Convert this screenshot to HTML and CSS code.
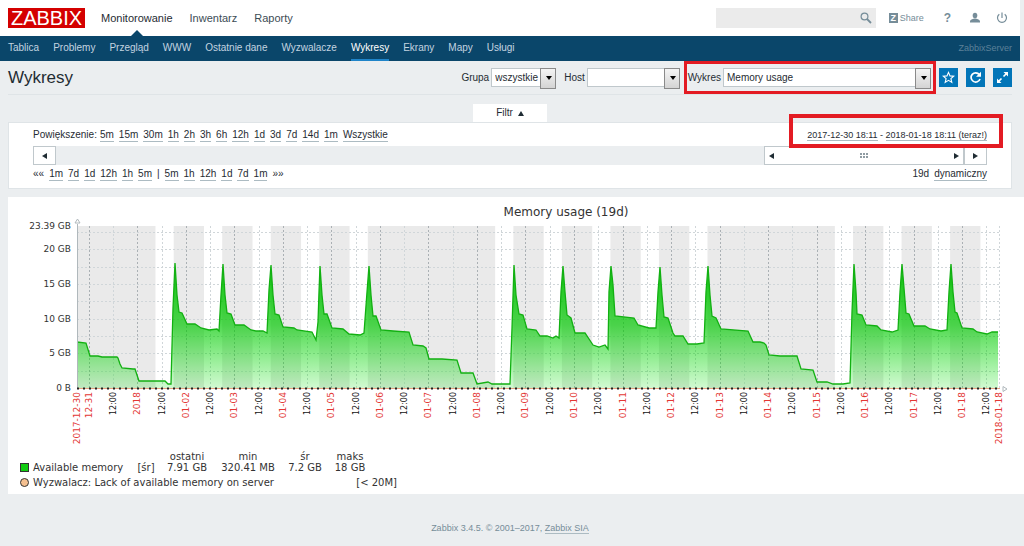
FILE: index.html
```html
<!DOCTYPE html>
<html lang="pl">

<head>
    <meta charset="UTF-8">
    <meta name="viewport" content="width=device-width, initial-scale=1.0">
    <title>Wykresy</title>
    <link rel="stylesheet" href="styles.css">
</head>

<body>
    <header class="header">
        <a href="#" class="logo">ZABBIX</a>
        <nav class="top-nav">
            <a href="#" class="selected">Monitorowanie</a>
            <a href="#">Inwentarz</a>
            <a href="#">Raporty</a>
        </nav>
        <form class="search">
            <input type="text" aria-label="Szukaj">
            <button type="button" aria-label="Szukaj">
                <svg width="12" height="12" viewBox="0 0 12 12"><circle cx="4.5" cy="4.5" r="3.4" fill="none" stroke="#768d99" stroke-width="1.2"/><path d="M7 7l4 4" stroke="#768d99" stroke-width="1.8"/></svg>
            </button>
        </form>
        <a href="#" class="share"><b>Z</b>Share</a>
        <a href="#" class="help">?</a>
        <a href="#" class="user" aria-label="Profil">
            <svg width="12" height="12" viewBox="0 0 12 12" fill="#768d99"><ellipse cx="6" cy="3.6" rx="2.3" ry="2.8"/><path d="M1 10.5V9.4C1 8 2.6 7.6 4.4 6.8h3.2C9.4 7.6 11 8 11 9.4v1.100z"/></svg>
        </a>
        <a href="#" class="signout" aria-label="Wyloguj">
            <svg width="12" height="12" viewBox="0 0 12 12" fill="none" stroke="#768d99" stroke-width="1.2"><path d="M3.3 2.2a4.500 4.500 0 1 0 5.400 0M6 0.500V6"/></svg>
        </a>
    </header>

    <nav class="sub-nav">
        <a href="#">Tablica</a>
        <a href="#">Problemy</a>
        <a href="#">Przegląd</a>
        <a href="#">WWW</a>
        <a href="#">Ostatnie dane</a>
        <a href="#">Wyzwalacze</a>
        <a href="#" class="selected">Wykresy</a>
        <a href="#">Ekrany</a>
        <a href="#">Mapy</a>
        <a href="#">Usługi</a>
        <span class="server-name">ZabbixServer</span>
    </nav>

    <div class="title-bar">
        <h1>Wykresy</h1>
        <div class="field">
            <label for="group">Grupa</label>
            <span class="select group"><select id="group"><option>wszystkie</option></select></span>
        </div>
        <div class="field">
            <label for="host">Host</label>
            <span class="select host"><select id="host"><option></option></select></span>
        </div>
        <div class="field marked">
            <label for="graph">Wykres</label>
            <span class="select graph"><select id="graph"><option>Memory usage</option></select></span>
        </div>
        <div class="buttons">
            <button type="button" aria-label="Dodaj do ulubionych">
                <svg width="13" height="13" viewBox="0 0 13 13" fill="none" stroke="#fff" stroke-width="1.1"><path d="M6.5 1.4l1.500 3.500 3.700.300-2.800 2.500.900 3.700-3.300-2-3.300 2 .9-3.700L1.3 5.2 5 4.9z"/></svg>
            </button>
            <button type="button" aria-label="Odśwież">
                <svg width="13" height="13" viewBox="0 0 13 13" fill="none"><path d="M10.3 3.6A4.6 4.6 0 1 0 11 8" stroke="#fff" stroke-width="1.7"/><path d="M12 .8v5H7z" fill="#fff"/></svg>
            </button>
            <button type="button" aria-label="Pełny ekran">
                <svg width="13" height="13" viewBox="0 0 13 13"><path d="M7.5 1H12v4.500zM1 7.500V12h4.500z" fill="#fff"/><path d="M10.5 2.500L7.5 5.500M2.500 10.500l3-3" stroke="#fff" stroke-width="1.6"/></svg>
            </button>
        </div>
    </div>

    <div class="filter-tab"><button type="button">Filtr <i class="arrow-up"></i></button></div>

    <section class="filter">
        <div class="filter-row">
            <div class="links zoom">
                <span>Powiększenie:</span>
                <a href="#">5m</a> <a href="#">15m</a> <a href="#">30m</a> <a href="#">1h</a> <a href="#">2h</a>
                <a href="#">3h</a> <a href="#">6h</a> <a href="#">12h</a> <a href="#">1d</a> <a href="#">3d</a>
                <a href="#">7d</a> <a href="#">14d</a> <a href="#">1m</a> <a href="#">Wszystkie</a>
            </div>
            <div class="period"><a href="#">2017-12-30 18:11</a> - <a href="#">2018-01-18 18:11 (teraz!)</a></div>
        </div>
        <div class="scrollbar">
            <button type="button" class="scroll-btn" aria-label="Wstecz"><i class="arrow-left"></i></button>
            <div class="track">
                <div class="thumb"><i class="arrow-left"></i><i class="grip"></i><i class="arrow-right"></i></div>
            </div>
            <button type="button" class="scroll-btn" aria-label="Dalej"><i class="arrow-right"></i></button>
        </div>
        <div class="filter-row">
            <div class="links">
                <span>««</span>
                <a href="#">1m</a> <a href="#">7d</a> <a href="#">1d</a> <a href="#">12h</a> <a href="#">1h</a> <a href="#">5m</a>
                <span>|</span>
                <a href="#">5m</a> <a href="#">1h</a> <a href="#">12h</a> <a href="#">1d</a> <a href="#">7d</a> <a href="#">1m</a>
                <span>»»</span>
            </div>
            <div class="links"><span>19d</span> <a href="#">dynamiczny</a></div>
        </div>
    </section>

    <section class="chart">
        <svg id="chart" viewBox="0 0 1016 252">
            <defs>
                <linearGradient id="fill" gradientUnits="userSpaceOnUse" x1="0" y1="66" x2="0" y2="191">
                    <stop offset="0" stop-color="#00c000" stop-opacity="0.95"/>
                    <stop offset="0.5" stop-color="#00c800" stop-opacity="0.68"/>
                    <stop offset="1" stop-color="#00e000" stop-opacity="0.18"/>
                </linearGradient>
            </defs>
            <text class="chart-title" x="558" y="19">Memory usage (19d)</text>
            <g id="bands"></g>
            <g id="grid"></g>
            <g id="series"></g>
            <path class="axis" d="M69.5 191V27M67 26l2.500-4 2.500 4zM995 189.500l4 2.500-4 2.500z"/>
            <path class="trigger" d="M69 191.500H992"/>
            <path class="trigger-dash" d="M69 191.500H992"/>
            <g id="labels"></g>
        </svg>

        <table class="legend">
            <tr>
                <td class="name"></td>
                <td class="func"></td>
                <th class="last">ostatni</th>
                <th class="min">min</th>
                <th class="avg">śr</th>
                <th class="max">maks</th>
            </tr>
            <tr>
                <td class="name"><i class="square"></i>Available memory</td>
                <td class="func">[śr]</td>
                <td>7.91 GB</td>
                <td>320.41 MB</td>
                <td>7.2 GB</td>
                <td>18 GB</td>
            </tr>
        </table>
        <div class="legend-trigger">
            <span><i class="circle"></i>Wyzwalacz: Lack of available memory on server</span>
            <span>[&lt; 20M]</span>
        </div>
    </section>

    <footer>Zabbix 3.4.5. © 2001–2017, <a href="#">Zabbix SIA</a></footer>

    <script>
        const NS = 'http://www.w3.org/2000/svg';
        const left = 69, right = 991, top_ = 29, bottom = 191;
        const day = (right - left) / 19;
        const gb = (bottom - top_) / 23.39;
        // pierwsza północ: 2017-12-31
        const midnight = left + day * 349 / 1440;

        // x, y kolejnych próbek
        const points = [
            69,145, 78,146, 82,159, 90,159, 94,160, 109,160, 110,161, 112,167, 114,171, 125,172, 127,172, 131,184,
            157,184, 160,187, 163,187, 165,111, 167,66, 169,98, 171,115, 174,116, 179,127, 187,127, 193,131, 201,133,
            209,132, 211,134, 213,98, 215,67, 217,98, 219,116, 223,117, 227,128, 236,128, 243,133, 248,134, 255,134,
            259,136, 261,93, 263,68, 265,98, 267,117, 271,118, 275,130, 286,131, 289,133, 304,135, 308,143, 310,125,
            311,95, 312,69, 314,98, 316,117, 319,117, 324,131, 335,132, 341,137, 352,138, 356,136, 359,95, 361,69,
            363,98, 365,119, 368,119, 373,133, 385,134, 401,135, 405,148, 415,149, 418,151, 421,162, 434,162, 449,163,
            453,176, 465,176, 469,187, 480,185, 484,187, 497,187, 502,187, 504,131, 506,68, 508,98, 511,117, 515,118,
            519,132, 528,133, 532,139, 539,139, 545,141, 548,139, 551,141, 553,95, 555,69, 557,95, 559,118, 563,121,
            567,136, 577,136, 585,148, 591,150, 597,148, 600,152, 601,95, 603,69, 605,88, 607,119, 626,121, 630,128,
            641,131, 648,131, 650,95, 652,70, 654,98, 656,120, 660,121, 665,136, 667,139, 675,139, 680,147, 689,147,
            696,146, 698,95, 700,69, 702,98, 704,119, 708,121, 713,132, 740,134, 745,145, 752,145, 756,146, 758,148,
            761,158, 772,159, 789,159, 793,172, 805,173, 809,185, 819,185, 825,187, 835,187, 842,186, 844,115, 846,67,
            848,95, 849,117, 854,118, 858,128, 869,129, 873,133, 884,135, 890,133, 892,95, 894,67, 896,91, 898,116,
            901,117, 906,129, 917,129, 922,132, 933,134, 939,133, 941,95, 943,67, 945,95, 947,115, 949,116, 954,131,
            965,132, 969,135, 979,137, 984,135, 990,135
        ];

        function add(group, tag, attrs, text) {
            const el = document.createElementNS(NS, tag);
            for (const key in attrs) {
                el.setAttribute(key, attrs[key]);
            }
            if (text) {
                el.textContent = text;
            }
            document.getElementById(group).appendChild(el);
        }

        function xLabel(x, text, cls) {
            add('labels', 'text', { class: cls, transform: `translate(${x} 195) rotate(-90)` }, text);
        }

        // tło: cały wykres szary, godziny pracy 9-18 białe (oprócz weekendów)
        add('bands', 'rect', { class: 'off-hours', x: left, y: top_, width: right - left, height: bottom - top_ });
        for (let i = 1; i < 18; i++) {
            const weekday = i % 7;
            if (weekday !== 0 && weekday !== 6) {
                add('bands', 'rect', { class: 'work-hours', x: midnight + day * (i + 0.375), y: top_, width: day * 0.375, height: bottom - top_ });
            }
        }
        add('bands', 'rect', { class: 'work-hours', x: midnight + day * 18.375, y: top_, width: right - midnight - day * 18.375, height: bottom - top_ });

        // siatka i opisy osi Y
        for (let v = 2.5; v < 23; v += 2.5) {
            const y = Math.round(bottom - v * gb) + 0.5;
            add('grid', 'path', { class: 'minor', d: `M${left} ${y}H${right}` });
        }
        [[0, '0 B'], [5, '5 GB'], [10, '10 GB'], [15, '15 GB'], [20, '20 GB'], [23.39, '23.39 GB']].forEach(([v, text]) => {
            add('labels', 'text', { class: 'y-label', x: 63, y: Math.round(bottom - v * gb) + 3 }, text);
        });

        // siatka i opisy osi X
        for (let i = 0; i < 19; i++) {
            const x = Math.round(midnight + day * i);
            const noon = Math.round(midnight + day * (i + 0.5));
            const label = i === 0 ? '12-31' : (i === 1 ? '2018' : '01-' + String(i).padStart(2, '0'));
            add('grid', 'path', { class: 'major', d: `M${x + 0.5} ${top_}V${bottom}` });
            add('grid', 'path', { class: 'minor', d: `M${noon + 0.5} ${top_}V${bottom}` });
            xLabel(x + 3, label, 'date');
            xLabel(noon + 3, '12:00', 'hour');
        }
        add('grid', 'path', { class: 'minor', d: `M${right + 0.5} ${top_}V${bottom}` });
        xLabel(left + 3, '2017-12-30', 'date');
        xLabel(right + 3, '2018-01-18', 'date');

        add('series', 'polygon', { points: `${left},${bottom} ${points.join(' ')} 990,${bottom}`, fill: 'url(#fill)' });
        add('series', 'polyline', { class: 'line', points: points.join(' ') });
    </script>
</body>

</html>
```
FILE: styles.css
```css
* {
    box-sizing: border-box;
}

body {
    margin: 0;
    background-color: #ebeef0;
    color: #1f2c33;
    font-family: "Liberation Sans", Arial, sans-serif;
    font-size: 10px;
    line-height: 12px;
}

a {
    color: inherit;
    text-decoration: none;
}

button,
input,
select {
    font: inherit;
    color: inherit;
    border: 0;
    padding: 0;
    margin: 0;
    border-radius: 0;
}

svg {
    display: block;
}

.header {
    display: flex;
    align-items: center;
    height: 36px;
    margin-right: 4px;
    padding: 0 12px 0 8px;
    background-color: #fff;
    color: #768d99;
}

.logo {
    width: 77px;
    height: 20px;
    background-color: #d40000;
    color: #fff;
    font-size: 20px;
    line-height: 20px;
    text-align: center;
}

.top-nav {
    display: flex;
    gap: 17px;
    margin-left: 16px;
    margin-right: auto;
    color: #3c4c55;
    font-size: 11px;
    line-height: 36px;
}

.top-nav .selected {
    position: relative;
    color: #1f2c33;
}

.top-nav .selected::after {
    content: "";
    position: absolute;
    left: 50%;
    bottom: 0;
    margin-left: -6px;
    border: 6px solid transparent;
    border-top: 0;
    border-bottom-color: #0a466a;
}

.search {
    display: flex;
    width: 160px;
    height: 20px;
    padding-right: 4px;
    background-color: #ebebeb;
}

.search input {
    flex: 1;
    min-width: 0;
    background: none;
}

.search button {
    background: none;
}

.share {
    display: flex;
    align-items: center;
    gap: 2px;
    margin-left: 13px;
    font-size: 9px;
}

.share b {
    width: 9px;
    height: 10px;
    background-color: #768d99;
    color: #fff;
    font-size: 9px;
    line-height: 10px;
    text-align: center;
}

.help {
    margin-left: 20px;
    font-size: 12px;
    font-weight: bold;
}

.user {
    margin-left: 18px;
}

.signout {
    margin-left: 15px;
}

.sub-nav {
    display: flex;
    gap: 14px;
    height: 25px;
    margin-right: 4px;
    padding: 0 8px;
    background-color: #0a466a;
    color: #c3d4e0;
    line-height: 24px;
}

.sub-nav .selected {
    border-bottom: 2px solid #1f84c9;
    color: #fff;
}

.server-name {
    margin-left: auto;
    color: #5c8199;
    font-size: 9px;
}

.title-bar {
    display: flex;
    align-items: center;
    height: 34px;
    margin: 0 12px 0 8px;
    border-bottom: 1px solid #dfe4e7;
}

h1 {
    margin: 0 auto 0 0;
    font-size: 17px;
    font-weight: normal;
    line-height: 20px;
}

.field {
    display: flex;
    align-items: center;
    gap: 2px;
    margin-right: 8px;
}

.select {
    position: relative;
}

.select select {
    display: block;
    width: 100%;
    height: 19px;
    padding: 0 3px;
    border: 1px solid #c0c8cc;
    background-color: #fff;
    appearance: none;
}

.select::before {
    content: "";
    position: absolute;
    top: 0;
    right: 0;
    width: 14px;
    height: 19px;
    border: 1px solid #8a8a8a;
    background: linear-gradient(#f4f4f4, #d4d4d4);
    pointer-events: none;
}

.select::after {
    content: "";
    position: absolute;
    top: 8px;
    right: 4px;
    border: 3px solid transparent;
    border-top: 4px solid #000;
    border-bottom: 0;
    pointer-events: none;
}

.group {
    width: 65px;
}

.host {
    width: 93px;
}

.graph {
    width: 208px;
}

/* czerwone ramki */
.marked,
.period {
    position: relative;
}

.marked::after,
.period::after {
    content: "";
    position: absolute;
    border: 4px solid #e31b23;
    pointer-events: none;
}

.marked::after {
    inset: -7px -5px -7px -4px;
    border-width: 3px;
}

.period {
    font-size: 9px;
}

.period::after {
    inset: -15px -16px -2px -18px;
}

.buttons {
    display: flex;
    gap: 8px;
}

.buttons button {
    display: grid;
    place-items: center;
    width: 19px;
    height: 19px;
    background-color: #0275b8;
}

.filter-tab {
    display: flex;
    justify-content: center;
    margin: 9px 12px 0 8px;
}

.filter-tab button {
    width: 74px;
    height: 18px;
    background-color: #fff;
}

.filter {
    margin: 0 12px 8px 8px;
    padding: 6px 24px 3px;
    border: 1px solid #dfe4e7;
    background-color: #fff;
}

.filter-row {
    display: flex;
    justify-content: space-between;
    height: 17px;
}

.links {
    display: flex;
    gap: 5px;
}

.zoom span {
    margin-right: -2px;
}

.filter a,
footer a {
    height: 13px;
    border-bottom: 1px solid #acbbc2;
}

.scrollbar {
    display: flex;
    height: 19px;
    margin-bottom: 3px;
}

.scroll-btn,
.thumb {
    display: flex;
    align-items: center;
    justify-content: center;
    border: 1px solid #c0c8cc;
    background-color: #fff;
}

.scroll-btn {
    width: 23px;
}

.track {
    display: flex;
    justify-content: flex-end;
    flex: 1;
    background-color: #ebeef0;
}

.thumb {
    justify-content: space-between;
    width: 22%;
    padding: 0 4px;
}

.arrow-left,
.arrow-right,
.arrow-up {
    display: inline-block;
    border: 3px solid transparent;
}

.arrow-left {
    border-left: 0;
    border-right: 5px solid #1f2c33;
}

.arrow-right {
    border-right: 0;
    border-left: 5px solid #1f2c33;
}

.arrow-up {
    margin-left: 2px;
    border-top: 0;
    border-bottom: 5px solid #1f2c33;
}

.grip {
    width: 9px;
    height: 6px;
    background: radial-gradient(circle at 1px 1px, #8f9ca3 1px, transparent 1px) 0 0 / 3px 3px;
}

.chart {
    margin-left: 8px;
    padding-bottom: 5px;
    background-color: #fff;
    color: #333;
    font-family: "DejaVu Sans", sans-serif;
}

#chart {
    width: 100%;
}

#chart text {
    fill: #333;
    font-size: 9px;
}

#chart .chart-title {
    font-size: 12px;
    text-anchor: middle;
}

#chart .y-label,
#chart .date,
#chart .hour {
    text-anchor: end;
}

#chart .date {
    fill: #e33734;
}

#chart .hour {
    fill: #111;
    font-size: 8px;
}

.off-hours {
    fill: #eaeaea;
}

.work-hours {
    fill: #fff;
}

.minor,
.major {
    fill: none;
    stroke: #d0d6d9;
    stroke-dasharray: 2 2;
}

.major {
    stroke: #aab0b4;
}

.line {
    fill: none;
    stroke: #12b012;
    stroke-width: 1.3;
}

.axis {
    fill: #fff;
    stroke: #b0b8bc;
}

.trigger {
    stroke: #e8a080;
}

.trigger-dash {
    stroke: #222;
    stroke-width: 2;
    stroke-dasharray: 2 4;
}

.legend {
    margin: 2px 0 0 12px;
    border-spacing: 0;
    line-height: 11px;
    table-layout: fixed;
    width: 350px;
    text-align: center;
}

.legend td,
.legend th {
    padding: 0;
    font-weight: normal;
    white-space: nowrap;
}

.legend .name {
    width: 114px;
    text-align: left;
}

.legend .func {
    width: 24px;
}

.legend .last {
    width: 58px;
}

.legend .min {
    width: 64px;
}

.legend .avg {
    width: 50px;
}

.legend .max {
    width: 40px;
}

.square,
.circle {
    display: inline-block;
    width: 9px;
    height: 9px;
    margin-right: 4px;
    border: 1px solid #333;
    background-color: #1c1;
    vertical-align: -1px;
}

.circle {
    border-radius: 50%;
    background-color: #f5c090;
}

.legend-trigger {
    display: flex;
    justify-content: space-between;
    width: 377px;
    margin: 4px 0 0 12px;
}

footer {
    margin: 28px 12px 12px 8px;
    color: #768d99;
    font-size: 9px;
    text-align: center;
}
```
